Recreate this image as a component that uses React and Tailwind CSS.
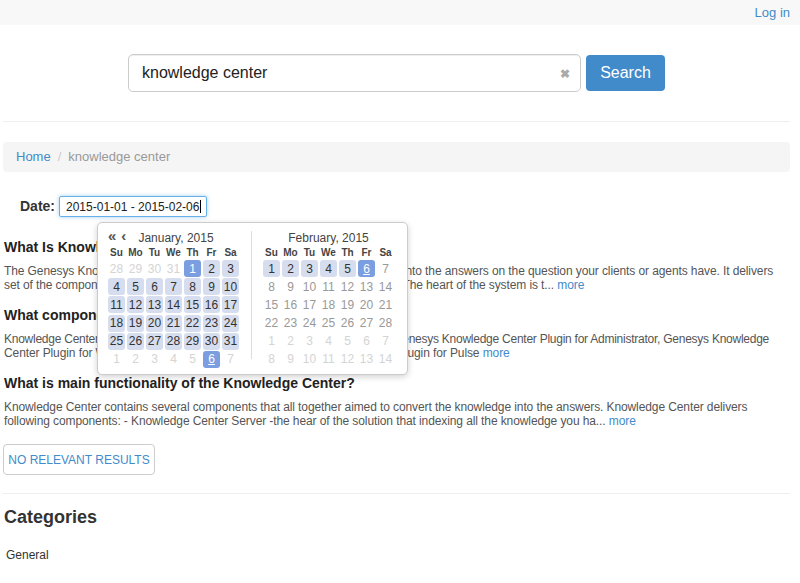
import React from 'react';

const FONT = { fontFamily: '"Liberation Sans", Arial, sans-serif' };

const DAYS = ['Su', 'Mo', 'Tu', 'We', 'Th', 'Fr', 'Sa'];

// kind: 'other' (outside month), 'plain', 'range', 'sel', 'today' (selected + underline)
const janCells = [
  ...[28, 29, 30, 31].map((d) => [d, 'other']),
  [1, 'sel'],
  [2, 'range'],
  [3, 'range'],
  ...Array.from({ length: 28 }, (_, i) => [i + 4, 'range']),
  ...[1, 2, 3, 4, 5].map((d) => [d, 'other']),
  [6, 'today'],
  [7, 'other'],
];

const febCells = [
  ...[1, 2, 3, 4, 5].map((d) => [d, 'range']),
  [6, 'today'],
  [7, 'plain'],
  ...Array.from({ length: 21 }, (_, i) => [i + 8, 'plain']),
  ...Array.from({ length: 14 }, (_, i) => [(i % 7) + 1 + (i >= 7 ? 7 : 0), 'other']),
];

function cellClass(kind) {
  if (kind === 'sel' || kind === 'today') return 'bg-[#7b9ee0] text-white';
  if (kind === 'range') return 'bg-[#d6ddee] text-[#333]';
  if (kind === 'other') return 'text-[#d4d4d4]';
  return 'text-[#999]';
}

function Month({ title, cells, nav }) {
  return (
    <div className="w-[131px]">
      <div className="relative flex h-[16px] items-center justify-center text-[12px] text-[#444]">
        {nav && (
          <span className="absolute left-0 top-[-2px] flex gap-[5px] text-[15px] font-bold leading-[16px] text-[#555]">
            <span>«</span>
            <span>‹</span>
          </span>
        )}
        <span className={nav ? 'ml-[5px]' : ''}>{title}</span>
      </div>
      <div className="grid grid-cols-7 gap-x-[2px]">
        {DAYS.map((d) => (
          <div key={d} className="flex h-[13px] items-center justify-center text-[10px] font-bold text-[#444]">
            {d}
          </div>
        ))}
      </div>
      <div className="mt-[1px] grid grid-cols-7 gap-x-[2px] gap-y-[1.2px]">
        {cells.map(([d, kind], i) => (
          <div
            key={i}
            className={`flex h-[17px] items-center justify-center rounded-[3px] text-[12px] ${cellClass(kind)}`}
          >
            <span className={kind === 'today' ? 'underline' : ''}>{d}</span>
          </div>
        ))}
      </div>
    </div>
  );
}

function DatePicker() {
  return (
    <div className="absolute left-[97px] top-[222px] z-10 flex rounded-[5px] border border-[#ccc] bg-white pb-[6px] pl-[10px] pr-[13px] pt-[7px] shadow-[0_2px_6px_rgba(0,0,0,0.18)]">
      <Month title="January, 2015" cells={janCells} nav />
      <div className="flex w-[24px] justify-center pt-[1px]">
        <div className="h-[128px] w-[1px] bg-[#ddd]" />
      </div>
      <Month title="February, 2015" cells={febCells} />
    </div>
  );
}

function Article({ title, lines, tight }) {
  return (
    <div className="mb-[13px]">
      <h3 className="text-[14px] font-bold leading-[20px] text-[#222]">{title}</h3>
      <p className="mt-[7px] whitespace-nowrap text-[12px] leading-[14px] tracking-[-0.1px] text-[#555]">
        <span className={tight ? 'tracking-[-0.25px]' : ''}>{lines[0]}</span>
        <br />
        {lines[1]} <a className="text-[#428bca]">more</a>
      </p>
    </div>
  );
}

export default function App() {
  return (
    <div className="relative min-h-[583px] overflow-hidden bg-white" style={FONT}>
      <nav className="flex h-[25px] items-center justify-end bg-[#f8f8f8] pr-[10px]">
        <a className="text-[13px] text-[#428bca]">Log in</a>
      </nav>

      <div className="flex justify-center gap-[5px] pr-[7px] pt-[29px]">
        <div className="relative flex h-[38px] w-[453px] items-center rounded-[5px] border border-[#ccc] bg-white pl-[13px] shadow-[inset_0_1px_1px_rgba(0,0,0,0.075)]">
          <span className="text-[16px] text-[#222]">knowledge center</span>
          <span className="absolute right-[10px] top-[10px] text-[12px] font-bold text-[#aaa]">✖</span>
        </div>
        <button className="mt-[1px] h-[36px] w-[79px] rounded-[4px] bg-[#428bca] text-[16px] text-white">Search</button>
      </div>

      <div className="ml-[3px] mr-[10px] mt-[29px] border-t border-[#eee]" />

      <div className="ml-[3px] mr-[10px] mt-[20px] flex h-[30px] items-center rounded-[4px] bg-[#f5f5f5] px-[13px] text-[13px]">
        <a className="text-[#428bca]">Home</a>
        <span className="px-[7px] text-[#ccc]">/</span>
        <span className="text-[#999]">knowledge center</span>
      </div>

      <div className="ml-[20px] mt-[24px] flex items-center gap-[4px]">
        <span className="text-[14px] font-bold text-[#333]">Date:</span>
        <div className="flex h-[21px] w-[148px] items-center rounded-[2px] border border-[#66afe9] pl-[6px] text-[12px] text-[#222] shadow-[0_0_4px_rgba(102,175,233,0.6)]">
          2015-01-01 - 2015-02-06<span className="ml-[1px] h-[13px] w-[1px] bg-black" />
        </div>
      </div>

      <div className="mr-[10px] mt-[20px] pl-[4px]">
        <Article
          title="What Is Knowledge Center?"
          lines={[
            'The Genesys Knowledge Center is the solution that converts the knowledge into the answers on the question your clients or agents have. It delivers',
            'set of the components that allow to capture, store and share the knowledge. The heart of the system is t...',
          ]}
        />
        <Article
          tight
          title="What components are included in Knowledge Center?"
          lines={[
            'Knowledge Center includes several components: Knowledge Center Server, Genesys Knowledge Center Plugin for Administrator, Genesys Knowledge',
            'Center Plugin for Workspace Desktop Edition, Genesys Knowledge Center Plugin for Pulse',
          ]}
        />
        <Article
          title="What is main functionality of the Knowledge Center?"
          lines={[
            'Knowledge Center contains several components that all together aimed to convert the knowledge into the answers. Knowledge Center delivers',
            'following components: - Knowledge Center Server -the hear of the solution that indexing all the knowledge you ha...',
          ]}
        />
      </div>

      <button className="ml-[3px] mt-[3px] h-[31px] w-[152px] rounded-[4px] border border-[#ccc] bg-white text-[12px] text-[#428bca]">
        NO RELEVANT RESULTS
      </button>

      <div className="ml-[3px] mr-[10px] mt-[18px] border-t border-[#eee]" />

      <h2 className="ml-[4px] mt-[10px] text-[18px] font-bold text-[#333]">Categories</h2>
      <div className="ml-[6px] mt-[15px] text-[12px] text-[#333]">General</div>

      <DatePicker />
    </div>
  );
}
